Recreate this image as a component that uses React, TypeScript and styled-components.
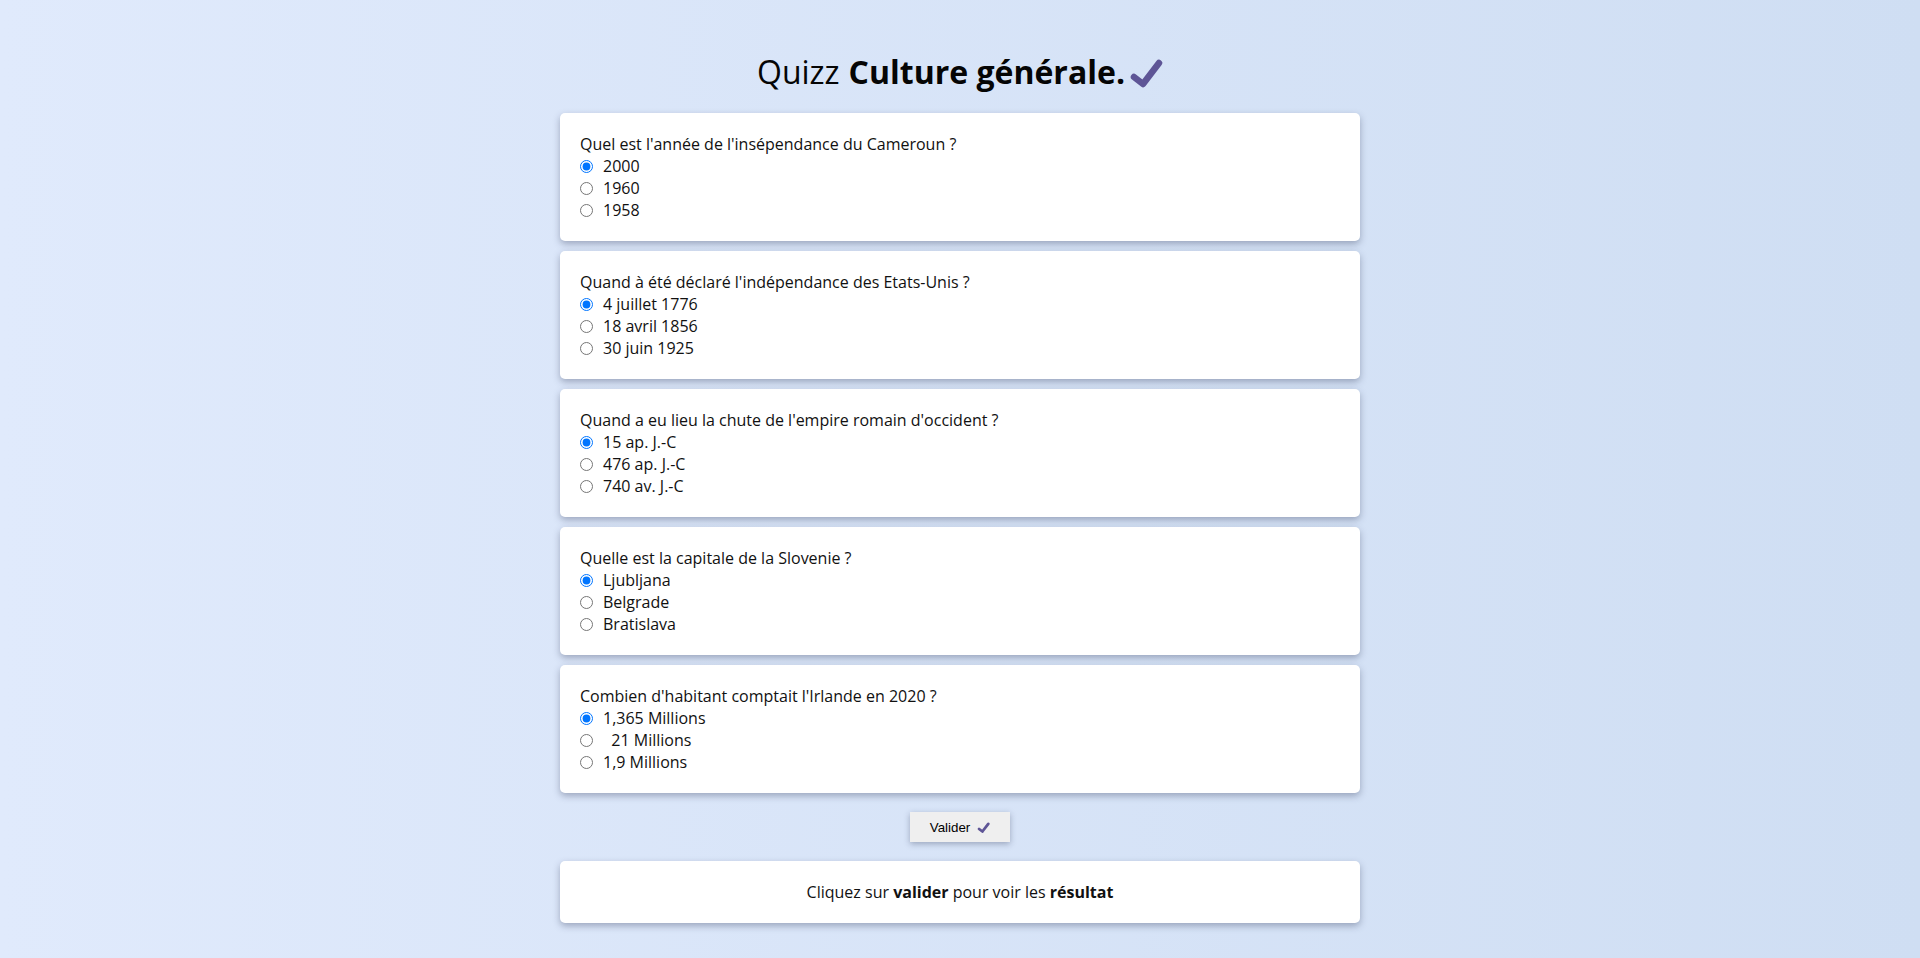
import React from "react";
import styled, { createGlobalStyle } from "styled-components";

const GlobalStyle = createGlobalStyle`
  html, body {
    margin: 0;
    padding: 0;
  }
  body {
    min-height: 100vh;
    background: linear-gradient(to right, #e0eafc, #cfdef3);
    font-family: "Open Sans", "Noto Sans", sans-serif;
    color: #111;
  }
`;

const Page = styled.main`
  display: flex;
  flex-direction: column;
  align-items: center;
  padding: 50px 0 33px;
  min-height: 100vh;
  box-sizing: border-box;
`;

const Title = styled.h1`
  margin: 0 0 20px;
  font-size: 32px;
  font-weight: 500;
  line-height: normal;
  display: flex;
  align-items: center;
  color: #050505;
`;

const Bold = styled.strong`
  font-weight: 700;
  margin-left: 9px;
`;

const TitleCheck = styled.svg`
  width: 34px;
  height: 30px;
  margin-left: 4px;
  margin-top: 2px;
`;

const Form = styled.form`
  display: flex;
  flex-direction: column;
  align-items: center;
  gap: 10px;
  width: 800px;
`;

const Card = styled.div<{ $center?: boolean }>`
  width: 100%;
  box-sizing: border-box;
  background: #fff;
  border-radius: 5px;
  padding: 20px;
  box-shadow: 0 3px 7px rgba(40, 50, 80, 0.35);
  font-size: 16px;
  line-height: normal;
  text-align: ${(p) => (p.$center ? "center" : "left")};
`;

const Question = styled.p`
  margin: 0;
`;

const Option = styled.label`
  display: flex;
  align-items: center;
  white-space: pre;
`;

const Radio = styled.input`
  width: 13px;
  height: 13px;
  margin: 0 10px 0 0;
  accent-color: #0075ff;
`;

const Button = styled.button`
  margin-top: 9px;
  margin-bottom: 9px;
  width: 100px;
  height: 30px;
  border: none;
  background: #efefef;
  box-shadow: 0 2px 6px rgba(40, 50, 80, 0.35);
  font-family: "Liberation Sans", Arial, sans-serif;
  font-size: 13.33px;
  color: #000;
  display: flex;
  align-items: center;
  justify-content: center;
  gap: 7px;
  cursor: pointer;
  padding: 0;
`;

const SmallCheck = styled.svg`
  width: 13px;
  height: 11px;
`;

const Check = ({ small }: { small?: boolean }) => {
  const C = small ? SmallCheck : TitleCheck;
  return (
    <C viewBox="0 0 34 30" aria-hidden="true">
      <polyline
        points="5,19 14,26 30,5"
        fill="none"
        stroke="#5e5596"
        strokeWidth={small ? 7.5 : 6.5}
        strokeLinecap="round"
        strokeLinejoin="round"
      />
    </C>
  );
};

const questions = [
  {
    q: "Quel est l'année de l'insépendance du Cameroun ?",
    a: ["2000", "1960", "1958"],
  },
  {
    q: "Quand à été déclaré l'indépendance des Etats-Unis ?",
    a: ["4 juillet 1776", "18 avril 1856", "30 juin 1925"],
  },
  {
    q: "Quand a eu lieu la chute de l'empire romain d'occident ?",
    a: ["15 ap. J.-C", "476 ap. J.-C", "740 av. J.-C"],
  },
  {
    q: "Quelle est la capitale de la Slovenie ?",
    a: ["Ljubljana", "Belgrade", "Bratislava"],
  },
  {
    q: "Combien d'habitant comptait l'Irlande en 2020 ?",
    a: ["1,365 Millions", "\u00a0\u00a021 Millions", "1,9 Millions"],
  },
];

export default function App() {
  return (
    <>
      <GlobalStyle />
      <Page>
        <Title>
          Quizz<Bold>Culture générale.</Bold>
          <Check />
        </Title>
        <Form onSubmit={(e) => e.preventDefault()}>
          {questions.map((item, qi) => (
            <Card key={qi}>
              <Question>{item.q}</Question>
              {item.a.map((ans, ai) => (
                <Option key={ai}>
                  <Radio type="radio" name={`q${qi}`} defaultChecked={ai === 0} />
                  {ans}
                </Option>
              ))}
            </Card>
          ))}
          <Button type="submit">
            Valider
            <Check small />
          </Button>
          <Card $center>
            Cliquez sur <strong>valider</strong> pour voir les <strong>résultat</strong>
          </Card>
        </Form>
      </Page>
    </>
  );
}
